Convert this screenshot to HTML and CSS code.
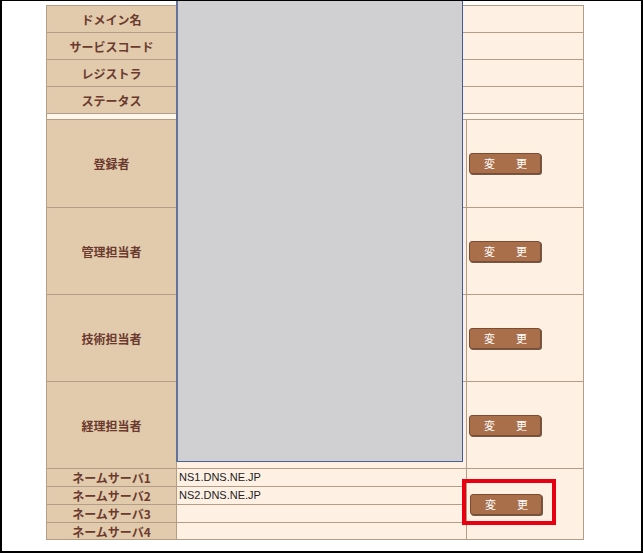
FILE: index.html
```html
<!DOCTYPE html>
<html lang="ja">
<head>
  <meta charset="UTF-8" />
  <title>ドメイン情報</title>
  <link rel="stylesheet" href="styles.css">
</head>
<body>
  <div class="frame">
    <div class="info">
      <div class="head">ドメイン名</div>
      <div class="val wide"></div>
      <div class="head">サービスコード</div>
      <div class="val wide"></div>
      <div class="head">レジストラ</div>
      <div class="val wide"></div>
      <div class="head">ステータス</div>
      <div class="val wide"></div>

      <div class="spacer"></div>

      <div class="head">登録者</div>
      <div class="val"></div>
      <div class="val act"><button class="chg"><span>変</span><span>更</span></button></div>
      <div class="head">管理担当者</div>
      <div class="val"></div>
      <div class="val act"><button class="chg"><span>変</span><span>更</span></button></div>
      <div class="head">技術担当者</div>
      <div class="val"></div>
      <div class="val act"><button class="chg"><span>変</span><span>更</span></button></div>
      <div class="head">経理担当者</div>
      <div class="val"></div>
      <div class="val act"><button class="chg"><span>変</span><span>更</span></button></div>

      <div class="head ns">ネームサーバ1</div>
      <div class="val ns-val">NS1.DNS.NE.JP</div>
      <div class="val act ns-act"><button class="chg ns-btn"><span>変</span><span>更</span></button></div>
      <div class="head ns">ネームサーバ2</div>
      <div class="val ns-val">NS2.DNS.NE.JP</div>
      <div class="head ns">ネームサーバ3</div>
      <div class="val ns-val"></div>
      <div class="head ns">ネームサーバ4</div>
      <div class="val ns-val"></div>
    </div>

    <!-- masked area -->
    <div class="mask"></div>
    <div class="mark"></div>
  </div>
</body>
</html>
```

FILE: styles.css
```css
body {
  margin: 0;
  background: #fff;
  font-family: "Noto Sans CJK JP", "Liberation Sans", sans-serif;
}

.frame {
  position: relative;
  width: 643px;
  height: 553px;
  box-sizing: border-box;
  border-style: solid;
  border-color: #000;
  border-width: 1px 2px 2px 2px;
  background: #fff;
}

.info {
  display: grid;
  grid-template-columns: 129px 289px 116px;
  grid-template-rows: 26px 26px 26px 26px 5px 87px 86px 86px 86px 17px 17px 17px 16px;
  gap: 1px;
  padding: 1px;
  width: 538px;
  box-sizing: border-box;
  margin: 4px 0 0 44px;
  background: #b39d86;
}

.head {
  background: #e2cbad;
  color: #6b3a2e;
  font-size: 12px;
  font-weight: bold;
  display: flex;
  align-items: center;
  justify-content: center;
}

.head.ns {
  line-height: 17px;
}

.val {
  background: #fef1e4;
}

.wide {
  grid-column: span 2;
}

.spacer {
  grid-column: span 3;
  background: #fff6ec;
}

.act {
  display: flex;
  align-items: center;
  padding-left: 2px;
}

.ns-act {
  grid-column: 3;
  grid-row: 10 / span 4;
  padding-left: 3px;
}

.ns-val {
  font-family: "Liberation Sans", Arial, sans-serif;
  font-size: 11px;
  color: #222;
  line-height: 17px;
  padding-left: 2px;
}

.chg {
  width: 72px;
  height: 21px;
  box-sizing: border-box;
  padding: 0 13px 0 14px;
  display: flex;
  align-items: center;
  justify-content: space-between;
  background: #a96f4a;
  border: 1px solid #7d4c31;
  border-radius: 3px;
  box-shadow: 1px 1px 0 #6f5a4c;
  color: #fff;
  font-family: "Noto Sans CJK JP", sans-serif;
  font-size: 11px;
  line-height: 1;
  cursor: pointer;
}

.mask {
  position: absolute;
  left: 174px;
  top: 0;
  width: 287px;
  height: 461px;
  box-sizing: border-box;
  background: #d0cfd1;
  border-left: 2px solid #66729a;
  border-right: 1px solid #3d5aa5;
  border-bottom: 1px solid #4a5f95;
}

.mark {
  position: absolute;
  left: 460px;
  top: 478px;
  width: 94px;
  height: 46px;
  box-sizing: border-box;
  border: 4px solid #e60012;
}
```
